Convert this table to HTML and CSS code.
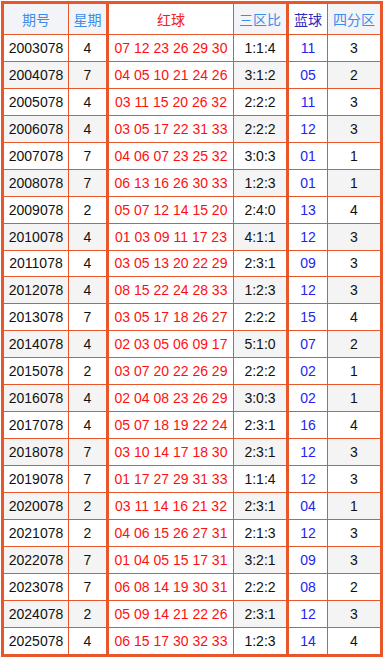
FILE: index.html
```html
<!DOCTYPE html>
<html lang="zh">
<head>
<meta charset="utf-8">
<title>开奖号码</title>
<link rel="stylesheet" href="styles.css">
</head>
<body>
<table class="draws">
  <colgroup>
    <col class="c-issue"><col class="c-week"><col class="c-red"><col class="c-zone"><col class="c-blue"><col class="c-quad">
  </colgroup>
  <thead>
    <tr>
      <th class="h-plain">期号</th>
      <th class="h-plain thick">星期</th>
      <th class="h-red">红球</th>
      <th class="h-plain thick">三区比</th>
      <th class="h-blue">蓝球</th>
      <th class="h-plain last">四分区</th>
    </tr>
  </thead>
  <tbody>
    <tr><td class="p">2003078</td><td class="p thick">4</td><td class="red">07 12 23 26 29 30</td><td class="p thick">1:1:4</td><td class="blue">11</td><td class="p last">3</td></tr>
    <tr><td class="p">2004078</td><td class="p thick">7</td><td class="red">04 05 10 21 24 26</td><td class="p thick">3:1:2</td><td class="blue">05</td><td class="p last">2</td></tr>
    <tr><td class="p">2005078</td><td class="p thick">4</td><td class="red">03 11 15 20 26 32</td><td class="p thick">2:2:2</td><td class="blue">11</td><td class="p last">3</td></tr>
    <tr><td class="p">2006078</td><td class="p thick">4</td><td class="red">03 05 17 22 31 33</td><td class="p thick">2:2:2</td><td class="blue">12</td><td class="p last">3</td></tr>
    <tr><td class="p">2007078</td><td class="p thick">7</td><td class="red">04 06 07 23 25 32</td><td class="p thick">3:0:3</td><td class="blue">01</td><td class="p last">1</td></tr>
    <tr><td class="p">2008078</td><td class="p thick">7</td><td class="red">06 13 16 26 30 33</td><td class="p thick">1:2:3</td><td class="blue">01</td><td class="p last">1</td></tr>
    <tr><td class="p">2009078</td><td class="p thick">2</td><td class="red">05 07 12 14 15 20</td><td class="p thick">2:4:0</td><td class="blue">13</td><td class="p last">4</td></tr>
    <tr><td class="p">2010078</td><td class="p thick">4</td><td class="red">01 03 09 11 17 23</td><td class="p thick">4:1:1</td><td class="blue">12</td><td class="p last">3</td></tr>
    <tr><td class="p">2011078</td><td class="p thick">4</td><td class="red">03 05 13 20 22 29</td><td class="p thick">2:3:1</td><td class="blue">09</td><td class="p last">3</td></tr>
    <tr><td class="p">2012078</td><td class="p thick">4</td><td class="red">08 15 22 24 28 33</td><td class="p thick">1:2:3</td><td class="blue">12</td><td class="p last">3</td></tr>
    <tr><td class="p">2013078</td><td class="p thick">7</td><td class="red">03 05 17 18 26 27</td><td class="p thick">2:2:2</td><td class="blue">15</td><td class="p last">4</td></tr>
    <tr><td class="p">2014078</td><td class="p thick">4</td><td class="red">02 03 05 06 09 17</td><td class="p thick">5:1:0</td><td class="blue">07</td><td class="p last">2</td></tr>
    <tr><td class="p">2015078</td><td class="p thick">2</td><td class="red">03 07 20 22 26 29</td><td class="p thick">2:2:2</td><td class="blue">02</td><td class="p last">1</td></tr>
    <tr><td class="p">2016078</td><td class="p thick">4</td><td class="red">02 04 08 23 26 29</td><td class="p thick">3:0:3</td><td class="blue">02</td><td class="p last">1</td></tr>
    <tr><td class="p">2017078</td><td class="p thick">4</td><td class="red">05 07 18 19 22 24</td><td class="p thick">2:3:1</td><td class="blue">16</td><td class="p last">4</td></tr>
    <tr><td class="p">2018078</td><td class="p thick">7</td><td class="red">03 10 14 17 18 30</td><td class="p thick">2:3:1</td><td class="blue">12</td><td class="p last">3</td></tr>
    <tr><td class="p">2019078</td><td class="p thick">7</td><td class="red">01 17 27 29 31 33</td><td class="p thick">1:1:4</td><td class="blue">12</td><td class="p last">3</td></tr>
    <tr><td class="p">2020078</td><td class="p thick">2</td><td class="red">03 11 14 16 21 32</td><td class="p thick">2:3:1</td><td class="blue">04</td><td class="p last">1</td></tr>
    <tr><td class="p">2021078</td><td class="p thick">2</td><td class="red">04 06 15 26 27 31</td><td class="p thick">2:1:3</td><td class="blue">12</td><td class="p last">3</td></tr>
    <tr><td class="p">2022078</td><td class="p thick">7</td><td class="red">01 04 05 15 17 31</td><td class="p thick">3:2:1</td><td class="blue">09</td><td class="p last">3</td></tr>
    <tr><td class="p">2023078</td><td class="p thick">7</td><td class="red">06 08 14 19 30 31</td><td class="p thick">2:2:2</td><td class="blue">08</td><td class="p last">2</td></tr>
    <tr><td class="p">2024078</td><td class="p thick">2</td><td class="red">05 09 14 21 22 26</td><td class="p thick">2:3:1</td><td class="blue">12</td><td class="p last">3</td></tr>
    <tr><td class="p">2025078</td><td class="p thick">4</td><td class="red">06 15 17 30 32 33</td><td class="p thick">1:2:3</td><td class="blue">14</td><td class="p last">4</td></tr>
  </tbody>
</table>
</body>
</html>
```

FILE: styles.css
```css
html, body {
  margin: 0;
  padding: 0;
  background: #ffffff;
}

.draws {
  margin: 1px;
  width: 382px;
  border: 3px solid #e8572a;
  border-collapse: separate;
  border-spacing: 0;
  table-layout: fixed;
  font-family: "Liberation Sans", Arial, "Noto Sans CJK SC", sans-serif;
  font-size: 14px;
  color: #111111;
}

.c-issue { width: 65px; }
.c-week  { width: 40px; }
.c-red   { width: 125px; }
.c-zone  { width: 55px; }
.c-blue  { width: 39px; }
.c-quad  { width: 52px; }

.draws th,
.draws td {
  box-sizing: border-box;
  padding: 0;
  text-align: center;
  white-space: nowrap;
  border-right: 1px solid #e8572a;
  border-bottom: 1px solid #e8572a;
}

.draws th {
  height: 31px;
  font-weight: normal;
  font-family: "Noto Sans CJK SC", "Liberation Sans", sans-serif;
  font-size: 14px;
}

.draws td {
  height: 26.94px;
  line-height: 16px;
}

.draws tbody tr:last-child td {
  border-bottom: 0;
  height: 25.94px;
}

.draws .thick {
  border-right: 3px solid #e8572a;
}

.draws .last {
  border-right: 0;
}

.h-plain {
  background: #f3f4f7;
  color: #3d8deb;
}

.h-red {
  background: #ffffff;
  color: #f22020;
}

.h-blue {
  background: #ffffff;
  color: #2b2bc0;
}

.p {
  background: #ffffff;
}

.draws tbody tr:nth-child(even) .p {
  background: #f4f4f4;
}

.red {
  color: #ff1010;
  background: #ffffff;
}

.blue {
  color: #2424f0;
  background: #ffffff;
}
```
